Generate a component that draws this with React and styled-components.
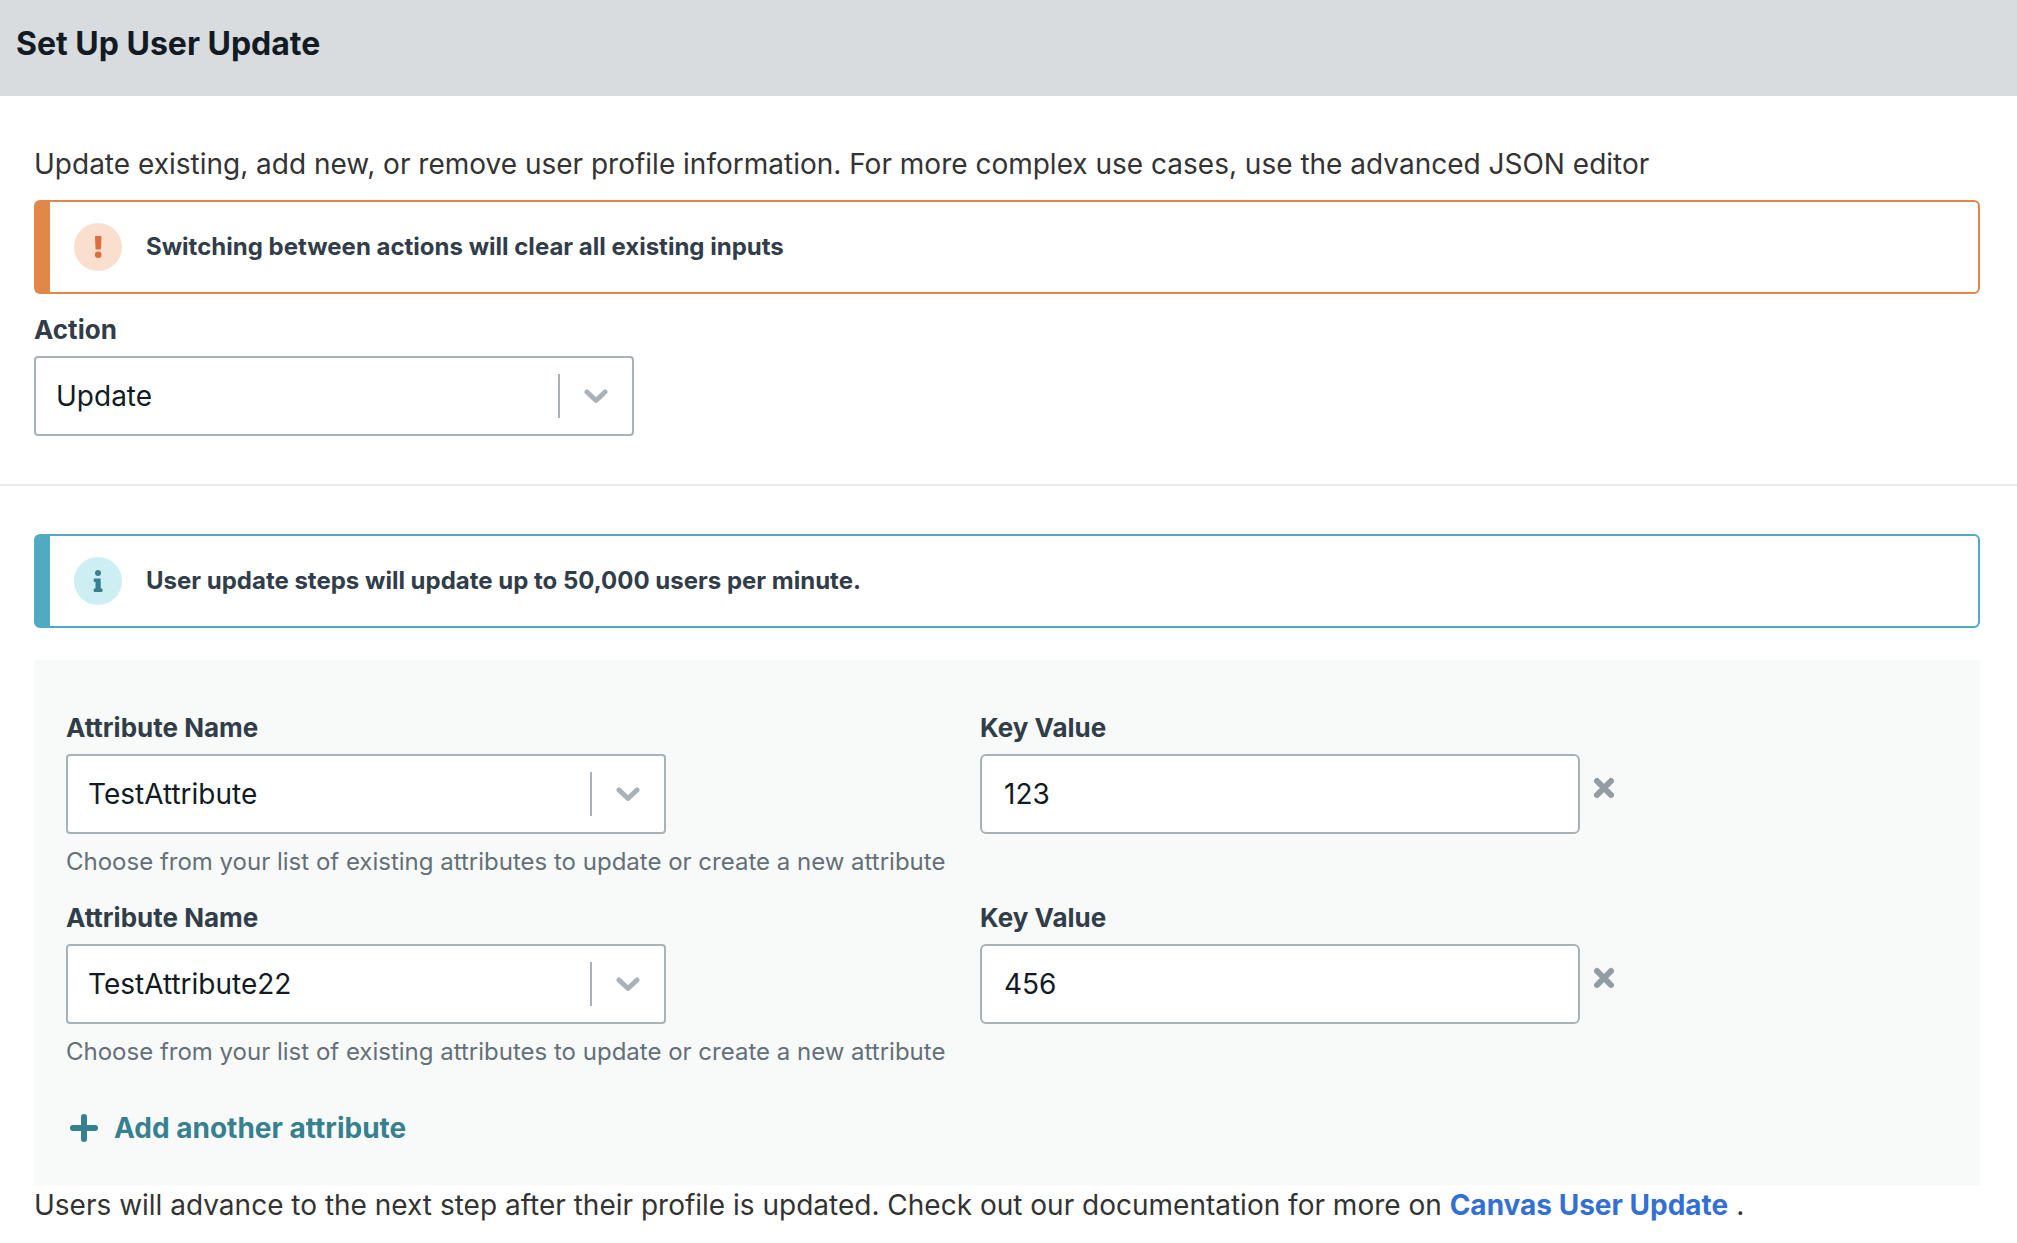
import React, { useState } from "react";
import styled, { createGlobalStyle } from "styled-components";

const GlobalStyle = createGlobalStyle`
  *, *::before, *::after { box-sizing: border-box; }
  body {
    margin: 0;
    background: #ffffff;
    color: #333333;
    font-family: Inter, "Liberation Sans", sans-serif;
    font-size: 28px;
    line-height: 40px;
  }
`;

const Header = styled.header`
  padding: 24px 16px 32px;
  background: #d8dcdf;
`;

const Title = styled.h1`
  margin: 0;
  color: #121b23;
  font-size: 32px;
  font-weight: 700;
  line-height: 40px;
`;

const Section = styled.section`
  padding: 48px 37px 0 34px;
`;

const ActionSection = styled(Section)`
  padding-bottom: 48px;
  border-bottom: 2px solid #ebebeb;
`;

const Text = styled.p`
  margin: 0;
`;

const tones = {
  warning: { line: "#e18849", tint: "#fadfce", glyph: "#dc6e3c" },
  info: { line: "#50abc2", tint: "#cdeff3", glyph: "#37808f" },
};

const AlertBox = styled.div`
  display: flex;
  align-items: center;
  gap: 24px;
  padding: 21px 24px;
  border: 2px solid ${(p) => tones[p.$tone].line};
  border-left-width: 16px;
  border-radius: 6px;
  color: #313d49;
  font-size: 24px;
  font-weight: 700;
  line-height: 32px;
`;

const IntroText = styled(Text)`
  margin-bottom: 16px;
`;

const AlertIcon = styled.svg`
  flex: none;
  width: 48px;
  height: 48px;
`;

const Field = styled.div`
  display: flex;
  flex-direction: column;
`;

const ActionField = styled(Field)`
  margin-top: 20px;
`;

const Label = styled.label`
  margin-bottom: 10px;
  color: #313d49;
  font-size: 26px;
  font-weight: 700;
  line-height: 32px;
`;

const SelectWrap = styled.div`
  position: relative;
  width: 600px;
  max-width: 100%;
`;

const SelectBox = styled.select`
  appearance: none;
  display: block;
  width: 100%;
  height: 80px;
  padding: 0 90px 0 20px;
  border: 2px solid #a8b2b8;
  border-radius: 4px;
  background: #ffffff;
  color: #121b23;
  font: inherit;
`;

const SelectIndicator = styled.span`
  position: absolute;
  inset: 0 2px 0 auto;
  display: flex;
  align-items: center;
  width: 74px;
  pointer-events: none;

  &::before {
    content: "";
    width: 2px;
    height: 44px;
    background: #a8b2b8;
  }

  svg {
    width: 24px;
    height: 16px;
    margin-left: 24px;
  }
`;

const Panel = styled.div`
  display: flex;
  flex-direction: column;
  gap: 24px;
  margin-top: 32px;
  padding: 52px 32px 37px;
  background: #f8faf9;
`;

const AttributeRow = styled.div`
  display: grid;
  grid-template-columns: 882px minmax(0, 1fr);
  column-gap: 32px;

  @media (max-width: 1600px) {
    grid-template-columns: minmax(0, 1fr);
    row-gap: 16px;
  }
`;

const Hint = styled.p`
  margin: 12px 0 0;
  color: #646f78;
  font-size: 24px;
  line-height: 32px;
`;

const ValueLine = styled.div`
  display: flex;
  gap: 12px;
`;

const ValueInput = styled.input`
  width: 600px;
  min-width: 0;
  height: 80px;
  padding: 0 22px;
  border: 2px solid #a8b2b8;
  border-radius: 6px;
  background: #ffffff;
  color: #121b23;
  font: inherit;
`;

const RemoveButton = styled.button`
  display: flex;
  align-items: center;
  flex: none;
  width: 24px;
  height: 68px;
  padding: 0;
  border: 0;
  background: none;
  cursor: pointer;
`;

const AddButton = styled.button`
  display: flex;
  align-items: center;
  align-self: flex-start;
  gap: 16px;
  margin: 16px 0 0;
  padding: 0 4px;
  border: 0;
  background: none;
  color: #37808f;
  font: inherit;
  font-weight: 700;
  cursor: pointer;
`;

const FooterText = styled(Text)`
  padding: 0 37px 16px 34px;
`;

const DocLink = styled.a`
  color: #3470d2;
  font-weight: 700;
  text-decoration: none;
`;

function Alert({ tone, children }) {
  const { tint, glyph } = tones[tone];
  return (
    <AlertBox $tone={tone} role="note">
      <AlertIcon viewBox="0 0 48 48" aria-hidden="true">
        <circle cx="24" cy="24" r="24" fill={tint} />
        {tone === "warning" ? (
          <g fill={glyph}>
            <path d="M22 13h4.500q1 0 1 1l-.5 11.500q-.1 1-1 1h-3.500q-.9 0-1-1l-.5-11.500q0-1 1-1z" />
            <circle cx="24.200" cy="31.700" r="3.300" />
          </g>
        ) : (
          <g fill={glyph}>
            <circle cx="24" cy="16" r="3" />
            <path d="M20.500 21.500h5.500q.7 0 .7.700v9.300h1q.8 0 .8.800v1.900q0 .8-.8.800h-7.200q-.8 0-.8-.8v-1.900q0-.8.8-.8h1v-6.500h-1q-.8 0-.8-.8v-1.900q0-.8.8-.8z" />
          </g>
        )}
      </AlertIcon>
      <span>{children}</span>
    </AlertBox>
  );
}

function Select({ id, options }) {
  const [value, setValue] = useState(options[0]);
  return (
    <SelectWrap>
      <SelectBox id={id} value={value} onChange={(e) => setValue(e.target.value)}>
        {options.map((o) => (
          <option key={o}>{o}</option>
        ))}
      </SelectBox>
      <SelectIndicator>
        <svg viewBox="0 0 24 16" fill="none" stroke="#a8b2b8" strokeWidth="5" strokeLinecap="round" strokeLinejoin="round" aria-hidden="true">
          <path d="M3 4l9 8.500L21 4" />
        </svg>
      </SelectIndicator>
    </SelectWrap>
  );
}

function Attribute({ index, name, initialValue }) {
  const [value, setValue] = useState(initialValue);
  return (
    <AttributeRow>
      <Field>
        <Label htmlFor={`name-${index}`}>Attribute Name</Label>
        <Select id={`name-${index}`} options={[name]} />
        <Hint>Choose from your list of existing attributes to update or create a new attribute</Hint>
      </Field>
      <Field>
        <Label htmlFor={`value-${index}`}>Key Value</Label>
        <ValueLine>
          <ValueInput id={`value-${index}`} type="text" value={value} onChange={(e) => setValue(e.target.value)} />
          <RemoveButton type="button" aria-label="Remove attribute">
            <svg width="24" height="24" viewBox="0 0 24 24" stroke="#929ca3" strokeWidth="6" strokeLinecap="round" aria-hidden="true">
              <path d="M5 5l14 14M19 5L5 19" />
            </svg>
          </RemoveButton>
        </ValueLine>
      </Field>
    </AttributeRow>
  );
}

const attributes = [
  { name: "TestAttribute", value: "123" },
  { name: "TestAttribute22", value: "456" },
];

export default function App() {
  return (
    <>
      <GlobalStyle />
      <Header>
        <Title>Set Up User Update</Title>
      </Header>
      <main>
        <ActionSection>
          <IntroText>
            Update existing, add new, or remove user profile information. For more complex use cases, use the advanced JSON editor
          </IntroText>
          <Alert tone="warning">Switching between actions will clear all existing inputs</Alert>
          <ActionField>
            <Label htmlFor="action">Action</Label>
            <Select id="action" options={["Update"]} />
          </ActionField>
        </ActionSection>
        <Section>
          <Alert tone="info">User update steps will update up to 50,000 users per minute.</Alert>
          <Panel>
            {attributes.map((a, i) => (
              <Attribute key={a.name} index={i} name={a.name} initialValue={a.value} />
            ))}
            <AddButton type="button">
              <svg width="28" height="28" viewBox="0 0 28 28" stroke="currentColor" strokeWidth="6" strokeLinecap="round" aria-hidden="true">
                <path d="M14 3v22M3 14h22" />
              </svg>
              Add another attribute
            </AddButton>
          </Panel>
        </Section>
        <FooterText>
          Users will advance to the next step after their profile is updated. Check out our documentation for more on{" "}
          <DocLink href="#canvas-user-update">Canvas User Update</DocLink> .
        </FooterText>
      </main>
    </>
  );
}
